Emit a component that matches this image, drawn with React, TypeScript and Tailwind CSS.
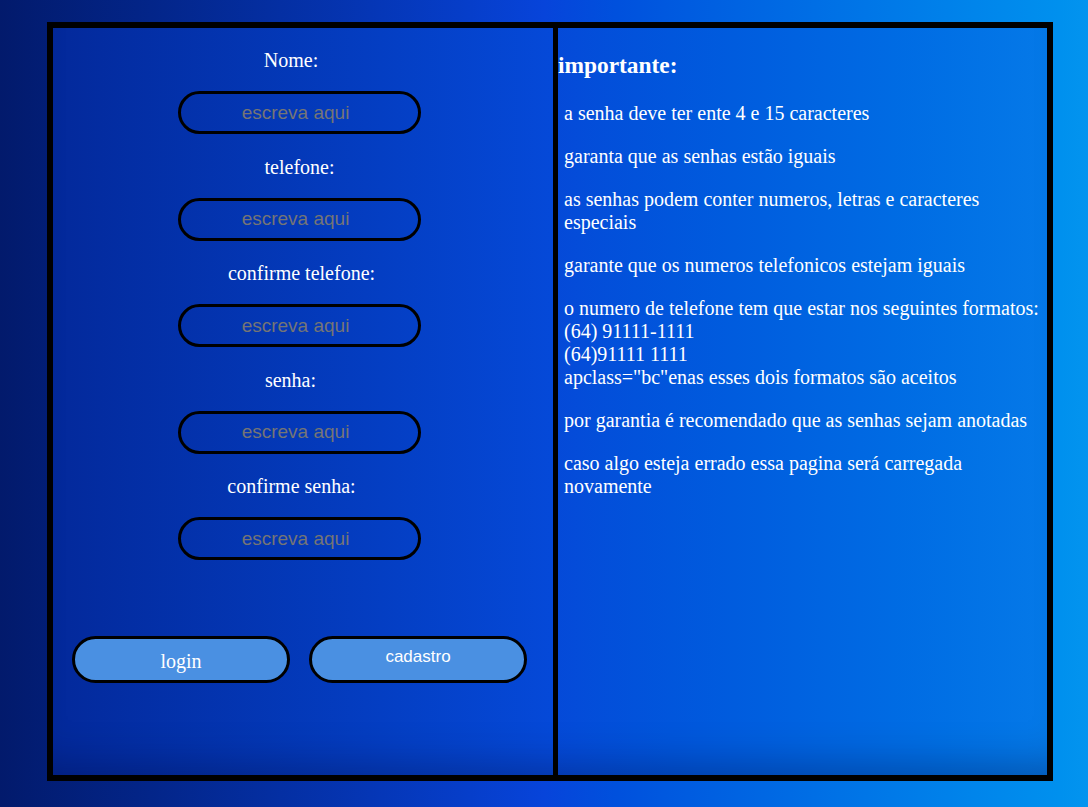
import React from "react";

// label text + small horizontal nudge seen in the original layout
const FIELDS = [
  { label: "Nome:", nudge: "pr-[16px]" },
  { label: "telefone:", nudge: "pl-[1px]" },
  { label: "confirme telefone:", nudge: "pl-[5px]" },
  { label: "senha:", nudge: "pr-[17px]" },
  { label: "confirme senha:", nudge: "pr-[15px]" },
];

const AVISOS: React.ReactNode[] = [
  "a senha deve ter ente 4 e 15 caracteres",
  "garanta que as senhas estão iguais",
  "as senhas podem conter numeros, letras e caracteres especiais",
  "garante que os numeros telefonicos estejam iguais",
  <>
    o numero de telefone tem que estar nos seguintes formatos:
    <br />
    (64) 91111-1111
    <br />
    (64)91111 1111
    <br />
    apclass="bc"enas esses dois formatos são aceitos
  </>,
  "por garantia é recomendado que as senhas sejam anotadas",
  "caso algo esteja errado essa pagina será carregada novamente",
];

export default function App() {
  return (
    <div className="min-h-screen w-full bg-gradient-to-r from-[#021a6c] via-[#0744da] to-[#0394ef] pl-[47px] pt-[22px] pb-[26px] font-['Liberation_Serif',serif] text-white">
      <div className="flex h-[759px] w-[1006px] border-[6px] border-black bg-gradient-to-r from-[#03299b] via-[#0549d8] to-[#0579e8] shadow-[inset_0_-40px_40px_-30px_rgba(0,0,40,0.3)]">
        {/* formulario */}
        <div className="flex w-[500px] flex-col">
          <div className="flex flex-col items-center pt-[21px] pr-[8px]">
            {FIELDS.map((f) => (
              <div key={f.label} className="flex flex-col items-center">
                <span className={`text-[20px] leading-[23px] ${f.nudge}`}>{f.label}</span>
                <input
                  type="text"
                  placeholder="escreva aqui"
                  className="mt-[19px] mb-[21.5px] h-[43px] w-[243px] rounded-full border-[3px] border-black bg-transparent pr-[7px] text-center font-['Liberation_Sans',sans-serif] text-[19px] text-white outline-none placeholder:text-[#757575]"
                />
              </div>
            ))}
          </div>
          <div className="ml-[19px] mt-[54.5px] flex gap-[19px]">
            <button className="h-[47px] w-[218px] rounded-full border-[3px] border-black bg-[#4a90e2] pt-[2px] font-['Liberation_Serif',serif] text-[20px] text-white">
              login
            </button>
            <button className="flex h-[47px] w-[218px] items-start justify-center rounded-full border-[3px] border-black bg-[#4a90e2] pt-[5px] font-['Liberation_Sans',sans-serif] text-[17px] text-white">
              cadastro
            </button>
          </div>
        </div>

        {/* avisos */}
        <div className="flex-1 border-l-[5px] border-black pt-[24px]">
          <h3 className="text-[23.4px] font-bold leading-[27px]">importante:</h3>
          <div className="mt-[22.5px] flex flex-col gap-[20px] pl-[6px] pr-[4px]">
            {AVISOS.map((a, i) => (
              <p key={i} className="text-[20px] leading-[23px]">
                {a}
              </p>
            ))}
          </div>
        </div>
      </div>
    </div>
  );
}
